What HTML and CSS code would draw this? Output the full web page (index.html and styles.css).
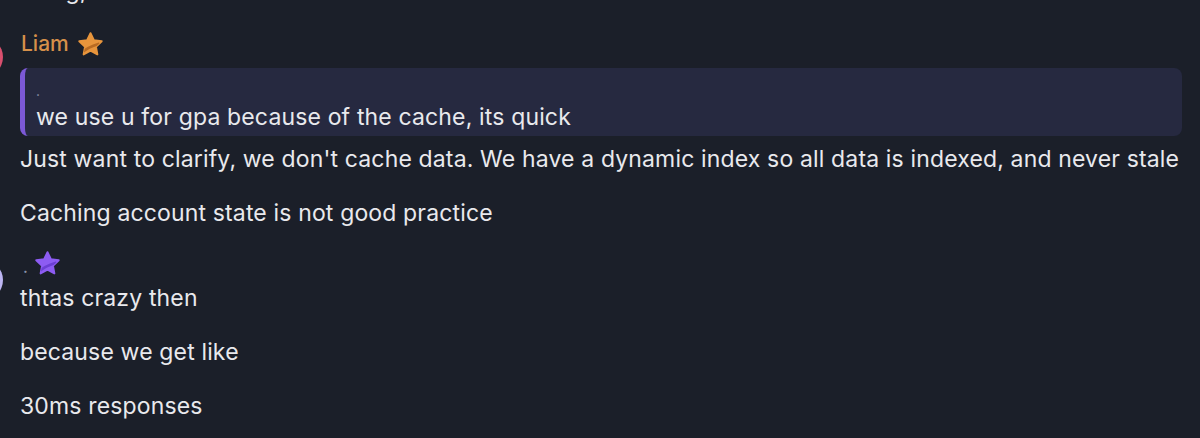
FILE: index.html
```html
<!DOCTYPE html>
<html lang="en">
<head>
<meta charset="utf-8">
<link rel="stylesheet" href="styles.css">
</head>
<body>
<div class="chat">
  <div class="msg cut">using,</div>

  <div class="group g1">
    <div class="avatar av-pink"></div>
    <div class="body">
      <div class="header">
        <span class="name name-orange">Liam</span>
        <svg class="star" viewBox="0 0 24 24" width="29" height="29">
          <defs><clipPath id="c1"><path d="M12 2.6l2.8 5.9 6.5.8-4.8 4.5 1.2 6.4L12 17.1l-5.7 3.1 1.2-6.4-4.8-4.5 6.5-.8z"/></clipPath></defs>
          <path d="M12 2.6l2.8 5.9 6.5.8-4.8 4.5 1.2 6.4L12 17.1l-5.7 3.1 1.2-6.4-4.8-4.5 6.5-.8z" fill="#e8953c" stroke="#e8953c" stroke-width="1.6" stroke-linejoin="round"/>
          <path d="M5 18.5C9 15 13 13.2 18.5 11.5" stroke="#b86a22" stroke-width="2.2" fill="none" clip-path="url(#c1)" stroke-linecap="round"/>
        </svg>
      </div>
      <div class="quote">
        <div class="quote-user">.</div>
        <div class="quote-text">we use u for gpa because of the cache, its quick</div>
      </div>
      <div class="msg first">Just want to clarify, we don't cache data. We have a dynamic index so all data is indexed, and never stale</div>
      <div class="msg">Caching account state is not good practice</div>
    </div>
  </div>

  <div class="group g2">
    <div class="avatar av-lav"></div>
    <div class="body">
      <div class="header h2">
        <span class="name name-dot">.</span>
        <svg class="star" viewBox="0 0 24 24" width="29" height="29">
          <defs><clipPath id="c2"><path d="M12 2.6l2.8 5.9 6.5.8-4.8 4.5 1.2 6.4L12 17.1l-5.7 3.1 1.2-6.4-4.8-4.5 6.5-.8z"/></clipPath></defs>
          <path d="M12 2.6l2.8 5.9 6.5.8-4.8 4.5 1.2 6.4L12 17.1l-5.7 3.1 1.2-6.4-4.8-4.5 6.5-.8z" fill="#8d5cf2" stroke="#8d5cf2" stroke-width="1.6" stroke-linejoin="round"/>
          <path d="M5 18.5C9 15 13 13.2 18.5 11.5" stroke="#6b3fd4" stroke-width="2.2" fill="none" clip-path="url(#c2)" stroke-linecap="round"/>
        </svg>
      </div>
      <div class="msg first2">thtas crazy then</div>
      <div class="msg">because we get like</div>
      <div class="msg">30ms responses</div>
    </div>
  </div>
</div>
</body>
</html>
```

FILE: styles.css
```css
html, body {
  margin: 0;
  padding: 0;
  background: #1b1f29;
  height: 100%;
  overflow: hidden;
}
body {
  font-family: Inter, "Noto Sans", sans-serif;
  color: #e9e9ed;
  -webkit-font-smoothing: antialiased;
}
.chat {
  padding: 0 18px 0 20px;
  margin-top: -24px;
}
.msg {
  font-size: 23px;
  letter-spacing: 0.15px;
  line-height: 30px;
  margin-top: 24px;
  white-space: nowrap;
}
.msg.cut {
  margin-top: 0;
}
.group {
  display: flex;
  align-items: flex-start;
  margin-left: -57px;
  gap: 17px;
}
.g1 { margin-top: 24px; }
.g2 { margin-top: 20px; }
.avatar {
  width: 40px;
  height: 40px;
  border-radius: 50%;
  flex: none;
}
.av-pink { background: #d94f6e; margin-top: 7px; }
.av-lav { background: #bdb5f2; margin-top: 12px; }
.body {
  flex: 1;
  min-width: 0;
}
.header {
  display: flex;
  align-items: center;
  height: 28px;
}
.name {
  font-size: 21px;
  font-weight: 500;
  line-height: 28px;
}
.name-orange { color: #d6904a; margin: 0 7px 0 1px; }
.name-dot { color: #8a93a8; font-size: 16px; margin: 8px 5px 0 3px; }
.star { display: block; }
.h2 { height: 30px; margin-bottom: 5px; }
.quote {
  margin-top: 10px;
  background: #262940;
  border-left: 5px solid #7c59d6;
  border-radius: 8px;
  padding: 8px 10px 4px 11px;
}
.quote-user {
  font-size: 14px;
  line-height: 23px;
  padding-top: 3px;
  color: #8a8fa8;
}
.quote-text {
  font-size: 23px;
  letter-spacing: 0.15px;
  line-height: 30px;
  white-space: nowrap;
}
.msg.first { margin-top: 8px; }
.msg.first2 { margin-top: 0; }
```
